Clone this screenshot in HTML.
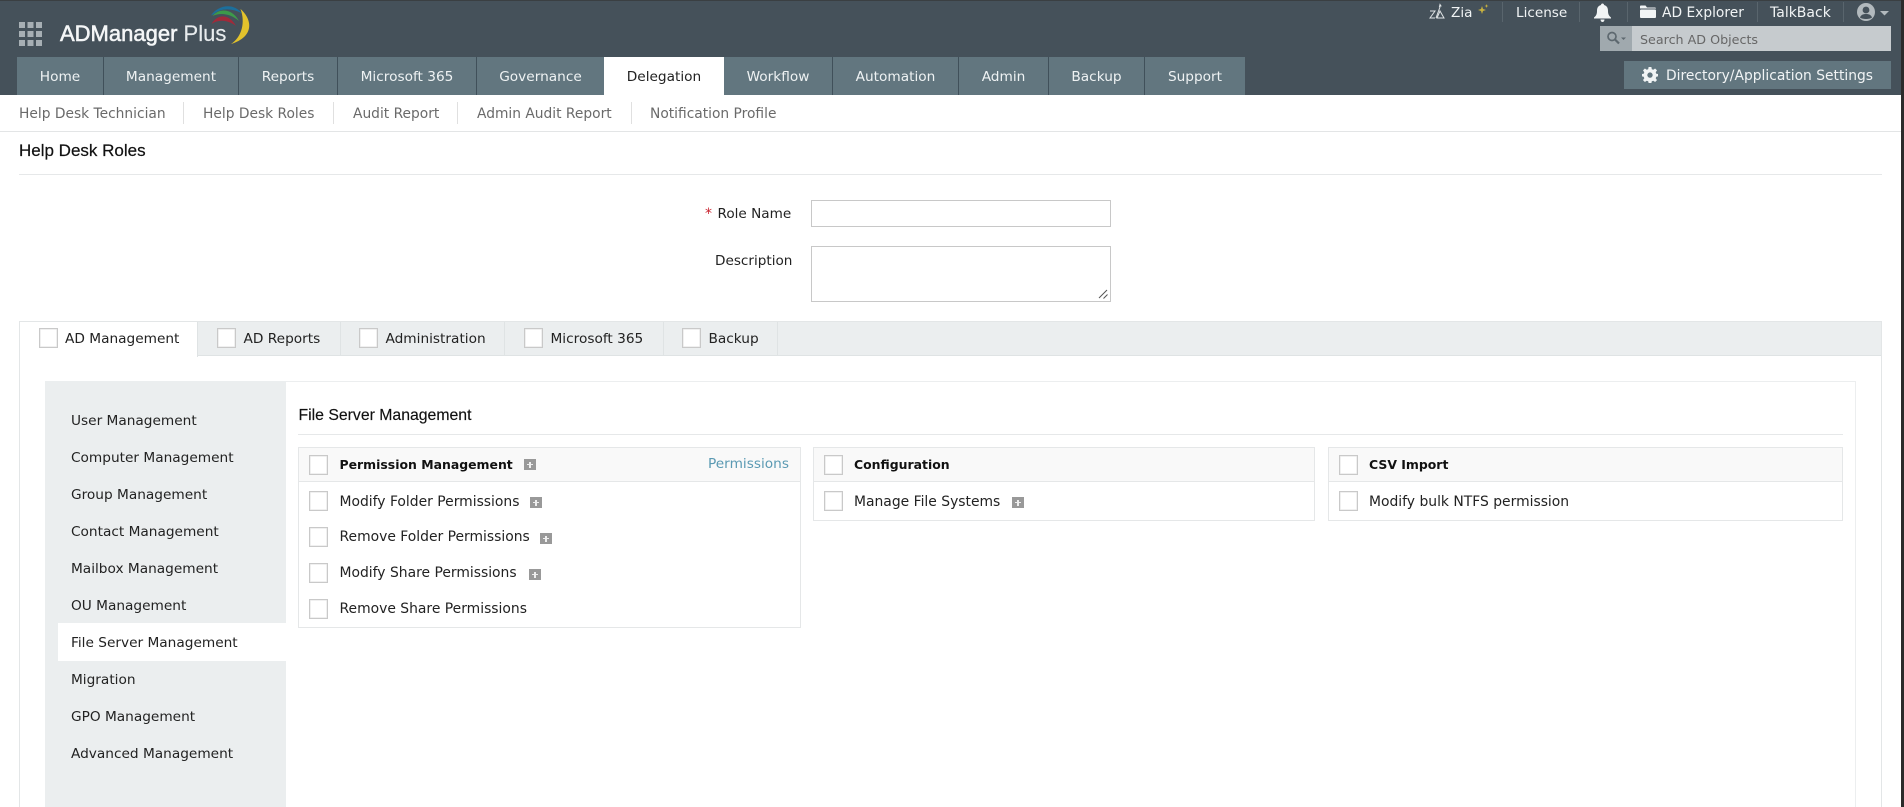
<!DOCTYPE html>
<html lang="en">
<head>
<meta charset="utf-8">
<title>Help Desk Roles</title>
<style>
html,body{margin:0;padding:0;background:#fff;width:1904px;height:807px;overflow:hidden}
#r{position:relative;width:1904px;height:807px;overflow:hidden;font-family:"DejaVu Sans","Liberation Sans",sans-serif;color:#222}
.a,.t,.cb,.pl{position:absolute}
.t{white-space:nowrap;line-height:20px;font-size:13.9px}
.sb{font-size:13.7px;left:71px}
.cb{width:17px;height:18px;border:1px solid #c9c9c9;background:#fff;box-shadow:inset 0 0 0 .5px #e2e2e2}
.pl{width:12px;height:11px;background:#999}
.pl:before{content:"";position:absolute;left:3px;top:5px;width:6px;height:1.4px;background:#eee}
.pl:after{content:"";position:absolute;left:5.3px;top:3px;width:1.4px;height:5.5px;background:#eee}
#hd{left:0;top:0;width:1901px;height:95px;background:#45515a;border-top:1px solid #3a3f42;box-sizing:border-box}
#strip{left:1901px;top:0;width:3px;height:807px;background:#2b2b2b}
.nav{position:absolute;top:57px;height:38px;background:#62767f;color:#eef2f3;font-size:13.7px;line-height:40px;text-align:center;box-sizing:border-box;border-right:1px solid #40505a}
.nav.on{background:#fff;color:#222;border:0}
.h{color:#f1f4f5}
.d{position:absolute;width:1px;background:#59656d;top:2px;height:20px}
.sn{font-size:13.8px;color:#6a6a6a;top:104px}
.sd{position:absolute;top:102px;height:22px;width:1px;background:#e0e0e0}
.tab{position:absolute;top:322px;height:33px;border-right:1px solid #dfe3e4;box-sizing:border-box}
.card{position:absolute;border:1px solid #e5e7e8;box-sizing:border-box;background:#fff}
.ch{position:absolute;left:0;right:0;top:0;height:33px;background:#f9f9f9;border-bottom:1px solid #e5e7e8}
b.t{font-size:12.45px;color:#111}
.tb{font-size:13.7px;top:329px}
</style>
</head>
<body>
<div id="r">

<div class="a" id="hd"></div>
<div class="a" id="strip"></div>

<!-- app grid -->
<svg class="a" style="left:19px;top:22px" width="23" height="24" fill="#a7afb4">
<rect x="0" y="0" width="6" height="6"/><rect x="8.5" y="0" width="6" height="6"/><rect x="17" y="0" width="6" height="6"/>
<rect x="0" y="9" width="6" height="6"/><rect x="8.5" y="9" width="6" height="6"/><rect x="17" y="9" width="6" height="6"/>
<rect x="0" y="18" width="6" height="6"/><rect x="8.5" y="18" width="6" height="6"/><rect x="17" y="18" width="6" height="6"/>
</svg>

<!-- logo -->
<div class="t" style="left:60px;top:20px;line-height:28px;font-family:'Liberation Sans',sans-serif;font-size:22px;color:#f4f6f7"><span style="-webkit-text-stroke:.55px #f4f6f7">ADManager</span> <span style="color:#e8ecee;-webkit-text-stroke:.15px #e8ecee">Plus</span></div>
<svg class="a" style="left:206px;top:4px" width="48" height="44">
<path d="M5 11.5C11 2 27 -2.5 36 9.5C26 4 15 4 8 10Z" fill="#1c6f9c"/>
<path d="M6.5 12C13 4 26 4 33 17C25 10 15 8 6.5 12Z" fill="#3d9a4a"/>
<path d="M5.5 20C11 10 23 9 30 22C22 16 13 15 5.5 20Z" fill="#a02a3a"/>
<path d="M34.5 5C47 16 48 33 25 40C36 33 39.5 18 34.5 5Z" fill="#e2c22c"/>
</svg>

<!-- top right -->
<svg class="a" style="left:1429px;top:3px" width="16" height="18" fill="none" stroke="#dfe3e5" stroke-width="1">
<path d="M1 8H6L1 15H6"/><path d="M8 15L11 8L15 15Z"/><path d="M7 15L11 4"/><path d="M11 1.5L12 3L10.5 3.5Z" fill="#dfe3e5"/>
</svg>
<div class="t h" style="left:1451px;top:3px;font-size:13.6px">Zia</div>
<svg class="a" style="left:1478px;top:3px" width="11" height="12" fill="#c9b23f">
<path d="M4 3L5 6L8 7L5 8L4 11L3 8L0 7L3 6Z"/><path d="M8.5 1L9 2.5L10.5 3L9 3.5L8.5 5L8 3.5L6.5 3L8 2.5Z"/>
</svg>
<div class="d" style="left:1502px"></div>
<div class="t h" style="left:1516px;top:3px;font-size:13.6px">License</div>
<div class="d" style="left:1579px"></div>
<svg class="a" style="left:1594px;top:3px" width="17" height="19" fill="#f1f4f5">
<path d="M8.5 0.5C9.5 .5 10 1.2 10 2C13 2.8 14 5 14 8C14 11 15 13 17 14.5V15.5H0V14.5C2 13 3 11 3 8C3 5 4 2.8 7 2C7 1.2 7.5 .5 8.5 .5Z"/>
<path d="M6.5 16.5H10.5C10.5 18 9.5 19 8.5 19C7.5 19 6.5 18 6.5 16.5Z"/>
</svg>
<div class="d" style="left:1627px"></div>
<svg class="a" style="left:1640px;top:5px" width="16" height="14" fill="#f1f4f5">
<path d="M0 1.5C0 .7 .5 .5 1 .5H5.5L7 2.5H15C15.6 2.5 16 3 16 3.5H0Z"/><rect x="0" y="4.5" width="16" height="8.5" rx="1"/>
</svg>
<div class="t h" style="left:1662px;top:3px;font-size:13.8px">AD Explorer</div>
<div class="d" style="left:1757px"></div>
<div class="t h" style="left:1770px;top:3px;font-size:14px">TalkBack</div>
<div class="d" style="left:1843px"></div>
<svg class="a" style="left:1857px;top:3px" width="33" height="18">
<circle cx="9" cy="9" r="9" fill="#b2b9bd"/>
<circle cx="9" cy="7" r="3.4" fill="#45515a"/>
<path d="M3 14.5C4 11.5 6.5 11 9 11C11.5 11 14 11.5 15 14.5C13 16.5 5 16.5 3 14.5Z" fill="#45515a"/>
<path d="M23 8H32L27.5 12.5Z" fill="#b2b9bd"/>
</svg>

<!-- search -->
<div class="a" style="left:1600px;top:26px;width:291px;height:25px;background:#c6cbce"></div>
<div class="a" style="left:1600px;top:26px;width:32px;height:25px;background:#a0a9ae"></div>
<svg class="a" style="left:1606px;top:31px" width="22" height="15" fill="none" stroke="#5d686f" stroke-width="1.7">
<circle cx="6" cy="5.5" r="4"/><path d="M9 8.5L13 12.5" stroke-width="2.2"/><path d="M15 6.5H20L17.5 9Z" fill="#5d686f" stroke="none"/>
</svg>
<div class="t" style="left:1640px;top:30px;font-size:12.7px;color:#666">Search AD Objects</div>

<!-- settings btn -->
<div class="a" style="left:1624px;top:61px;width:267px;height:28px;background:#62767f"></div>
<svg class="a" style="left:1642px;top:67px" width="16" height="16" viewBox="0 0 16 16">
<path fill="#f1f4f5" fill-rule="evenodd" d="M6.6 0H9.4L9.8 2.2L11.3 2.8L13.1 1.5L15 3.4L13.7 5.2L14.3 6.7L16 7V9.4L14.3 9.8L13.7 11.3L15 13.1L13.1 15L11.3 13.7L9.8 14.3L9.4 16H6.6L6.2 14.3L4.7 13.7L2.9 15L1 13.1L2.3 11.3L1.7 9.8L0 9.4V7L1.7 6.7L2.3 5.2L1 3.4L2.9 1.5L4.7 2.8L6.2 2.2ZM8 5.4A2.7 2.7 0 1 0 8 10.8A2.7 2.7 0 1 0 8 5.4Z"/>
</svg>
<div class="t h" style="left:1666px;top:66px;font-size:13.85px">Directory/Application Settings</div>

<!-- main nav -->
<div class="nav" style="left:17px;width:87px">Home</div>
<div class="nav" style="left:104px;width:135px">Management</div>
<div class="nav" style="left:239px;width:99px">Reports</div>
<div class="nav" style="left:338px;width:139px">Microsoft 365</div>
<div class="nav" style="left:477px;width:127px;border:0">Governance</div>
<div class="nav on" style="left:604px;width:120px">Delegation</div>
<div class="nav" style="left:724px;width:109px">Workflow</div>
<div class="nav" style="left:833px;width:126px">Automation</div>
<div class="nav" style="left:959px;width:90px">Admin</div>
<div class="nav" style="left:1049px;width:96px">Backup</div>
<div class="nav" style="left:1145px;width:100px;border:0">Support</div>

<!-- sub nav -->
<div class="t sn" style="left:19px">Help Desk Technician</div>
<div class="sd" style="left:183px"></div>
<div class="t sn" style="left:203px">Help Desk Roles</div>
<div class="sd" style="left:333px"></div>
<div class="t sn" style="left:353px">Audit Report</div>
<div class="sd" style="left:457px"></div>
<div class="t sn" style="left:477px">Admin Audit Report</div>
<div class="sd" style="left:631px"></div>
<div class="t sn" style="left:650px">Notification Profile</div>
<div class="a" style="left:0;top:131px;width:1901px;height:1px;background:#e3e5e6"></div>

<!-- title -->
<div class="t" style="left:19px;top:141px;font-family:'Liberation Sans',sans-serif;font-size:17px;color:#111;-webkit-text-stroke:.2px #111">Help Desk Roles</div>
<div class="a" style="left:19px;top:174px;width:1863px;height:1px;background:#e6e8e9"></div>

<!-- form -->
<div class="t" style="left:705px;top:204px;color:#c8202c;font-size:14px">*</div>
<div class="t" style="left:717.5px;top:204px;font-size:13.6px">Role Name</div>
<div class="a" style="left:811px;top:200px;width:300px;height:27px;border:1px solid #c8c8c8;box-sizing:border-box"></div>
<div class="t" style="left:715px;top:251px;font-size:13.6px">Description</div>
<div class="a" style="left:811px;top:246px;width:300px;height:56px;border:1px solid #c8c8c8;box-sizing:border-box"></div>
<svg class="a" style="left:1098px;top:289px" width="11" height="11" stroke="#555" stroke-width="1"><path d="M1 9L9 1M5.5 9.5L9.5 5.5"/></svg>

<!-- tabs box -->
<div class="a" style="left:19px;top:321px;width:1863px;height:486px;border:1px solid #e3e6e7;border-bottom:0;box-sizing:border-box"></div>
<div class="a" style="left:20px;top:322px;width:1861px;height:33px;background:#ebeeef;border-bottom:1px solid #dfe3e4"></div>
<div class="a" style="left:20px;top:322px;width:178px;height:35px;background:#fff;border-right:1px solid #dfe3e4;box-sizing:border-box"></div>
<div class="tab" style="left:198px;width:143px"></div>
<div class="tab" style="left:341px;width:164px"></div>
<div class="tab" style="left:505px;width:159px"></div>
<div class="tab" style="left:664px;width:114px"></div>
<div class="cb" style="left:39px;top:328px"></div><div class="t tb" style="left:65px">AD Management</div>
<div class="cb" style="left:217px;top:328px"></div><div class="t tb" style="left:243.5px">AD Reports</div>
<div class="cb" style="left:359px;top:328px"></div><div class="t tb" style="left:385.5px">Administration</div>
<div class="cb" style="left:524px;top:328px"></div><div class="t tb" style="left:550.5px">Microsoft 365</div>
<div class="cb" style="left:682px;top:328px"></div><div class="t tb" style="left:708.5px">Backup</div>

<!-- inner panel -->
<div class="a" style="left:45px;top:381px;width:1811px;height:426px;border:1px solid #eceeef;border-bottom:0;box-sizing:border-box"></div>
<div class="a" style="left:45px;top:381px;width:241px;height:426px;background:#ebeeef"></div>
<div class="a" style="left:58px;top:623px;width:228px;height:38px;background:#fff"></div>
<div class="t sb" style="top:411px">User Management</div>
<div class="t sb" style="top:448px">Computer Management</div>
<div class="t sb" style="top:485px">Group Management</div>
<div class="t sb" style="top:522px">Contact Management</div>
<div class="t sb" style="top:559px">Mailbox Management</div>
<div class="t sb" style="top:596px">OU Management</div>
<div class="t sb" style="top:633px">File Server Management</div>
<div class="t sb" style="top:670px">Migration</div>
<div class="t sb" style="top:707px">GPO Management</div>
<div class="t sb" style="top:744px">Advanced Management</div>

<!-- content -->
<div class="t" style="left:298.5px;top:406px;font-family:'Liberation Sans',sans-serif;font-size:15.8px;color:#111;-webkit-text-stroke:.15px #111">File Server Management</div>
<div class="a" style="left:298px;top:434px;width:1545px;height:1px;background:#e6e8e9"></div>

<div class="card" style="left:298px;top:447px;width:503px;height:181px"><div class="ch"></div></div>
<div class="card" style="left:813px;top:447px;width:502px;height:74px"><div class="ch"></div></div>
<div class="card" style="left:1328px;top:447px;width:515px;height:74px"><div class="ch"></div></div>

<div class="cb" style="left:309px;top:455px"></div>
<b class="t" style="left:339.5px;top:455px">Permission Management</b>
<div class="pl" style="left:524px;top:459px"></div>
<div class="t" style="left:708px;top:454px;font-size:13.7px;color:#5b9ab3">Permissions</div>

<div class="cb" style="left:309px;top:491px"></div>
<div class="t" style="left:339.5px;top:492px">Modify Folder Permissions</div>
<div class="pl" style="left:530px;top:497px"></div>
<div class="cb" style="left:309px;top:527px"></div>
<div class="t" style="left:339.5px;top:527px">Remove Folder Permissions</div>
<div class="pl" style="left:540px;top:533px"></div>
<div class="cb" style="left:309px;top:563px"></div>
<div class="t" style="left:339.5px;top:563px">Modify Share Permissions</div>
<div class="pl" style="left:529px;top:569px"></div>
<div class="cb" style="left:309px;top:599px"></div>
<div class="t" style="left:339.5px;top:599px">Remove Share Permissions</div>

<div class="cb" style="left:824px;top:455px"></div>
<b class="t" style="left:854px;top:455px">Configuration</b>
<div class="cb" style="left:824px;top:491px"></div>
<div class="t" style="left:854px;top:492px">Manage File Systems</div>
<div class="pl" style="left:1012px;top:497px"></div>

<div class="cb" style="left:1339px;top:455px"></div>
<b class="t" style="left:1369px;top:455px">CSV Import</b>
<div class="cb" style="left:1339px;top:491px"></div>
<div class="t" style="left:1369px;top:492px">Modify bulk NTFS permission</div>

</div>
</body>
</html>
